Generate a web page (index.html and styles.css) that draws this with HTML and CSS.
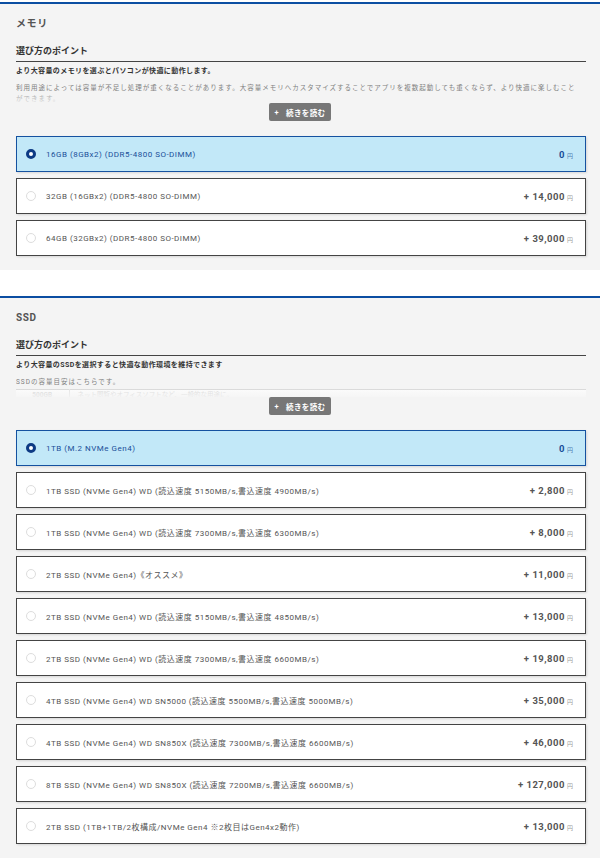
FILE: index.html
```html
<!DOCTYPE html>
<html lang="ja">
<head>
<meta charset="utf-8">
<title>カスタマイズ</title>
<link rel="stylesheet" href="styles.css">
</head>
<body>
<div class="page">
  <section class="panel">
    <h2 class="panel-title">メモリ</h2>
    <h3 class="point-title">選び方のポイント</h3>
    <div class="point-body">
      <p class="lead">より大容量のメモリを選ぶとパソコンが快適に動作します。</p>
      <p class="desc">利用用途によっては容量が不足し処理が重くなることがあります。大容量メモリへカスタマイズすることでアプリを複数起動しても重くならず、より快適に楽しむことができます。</p>
    </div>
    <div class="more-wrap"><button class="more"><span class="plus">+</span>続きを読む</button></div>
    <ul class="options">
      <li class="opt sel"><span class="radio"></span><span class="label">16GB (8GBx2) (DDR5-4800 SO-DIMM)</span><span class="price">0<span class="yen">円</span></span></li>
      <li class="opt"><span class="radio"></span><span class="label">32GB (16GBx2) (DDR5-4800 SO-DIMM)</span><span class="price">+ 14,000<span class="yen">円</span></span></li>
      <li class="opt"><span class="radio"></span><span class="label">64GB (32GBx2) (DDR5-4800 SO-DIMM)</span><span class="price">+ 39,000<span class="yen">円</span></span></li>
    </ul>
  </section>

  <section class="panel">
    <h2 class="panel-title">SSD</h2>
    <h3 class="point-title">選び方のポイント</h3>
    <div class="point-body">
      <p class="lead">より大容量のSSDを選択すると快適な動作環境を維持できます</p>
      <p class="desc">SSDの容量目安はこちらです。</p>
      <table class="guide">
        <tr><th>500GB</th><td>ネット閲覧やオフィスソフトなど、一般的な用途に。</td></tr>
      </table>
    </div>
    <div class="more-wrap"><button class="more"><span class="plus">+</span>続きを読む</button></div>
    <ul class="options">
      <li class="opt sel"><span class="radio"></span><span class="label">1TB (M.2 NVMe Gen4)</span><span class="price">0<span class="yen">円</span></span></li>
      <li class="opt"><span class="radio"></span><span class="label">1TB SSD (NVMe Gen4) WD (読込速度 5150MB/s,書込速度 4900MB/s)</span><span class="price">+ 2,800<span class="yen">円</span></span></li>
      <li class="opt"><span class="radio"></span><span class="label">1TB SSD (NVMe Gen4) WD (読込速度 7300MB/s,書込速度 6300MB/s)</span><span class="price">+ 8,000<span class="yen">円</span></span></li>
      <li class="opt"><span class="radio"></span><span class="label">2TB SSD (NVMe Gen4)《オススメ》</span><span class="price">+ 11,000<span class="yen">円</span></span></li>
      <li class="opt"><span class="radio"></span><span class="label">2TB SSD (NVMe Gen4) WD (読込速度 5150MB/s,書込速度 4850MB/s)</span><span class="price">+ 13,000<span class="yen">円</span></span></li>
      <li class="opt"><span class="radio"></span><span class="label">2TB SSD (NVMe Gen4) WD (読込速度 7300MB/s,書込速度 6600MB/s)</span><span class="price">+ 19,800<span class="yen">円</span></span></li>
      <li class="opt"><span class="radio"></span><span class="label">4TB SSD (NVMe Gen4) WD SN5000 (読込速度 5500MB/s,書込速度 5000MB/s)</span><span class="price">+ 35,000<span class="yen">円</span></span></li>
      <li class="opt"><span class="radio"></span><span class="label">4TB SSD (NVMe Gen4) WD SN850X (読込速度 7300MB/s,書込速度 6600MB/s)</span><span class="price">+ 46,000<span class="yen">円</span></span></li>
      <li class="opt"><span class="radio"></span><span class="label">8TB SSD (NVMe Gen4) WD SN850X (読込速度 7200MB/s,書込速度 6600MB/s)</span><span class="price">+ 127,000<span class="yen">円</span></span></li>
      <li class="opt"><span class="radio"></span><span class="label">2TB SSD (1TB+1TB/2枚構成/NVMe Gen4 ※2枚目はGen4x2動作)</span><span class="price">+ 13,000<span class="yen">円</span></span></li>
    </ul>
  </section>
</div>
</body>
</html>
```

FILE: styles.css
```css
* {
  box-sizing: border-box;
  margin: 0;
  padding: 0;
}

body {
  margin: 0;
  background: #ffffff;
  font-family: Roboto, "Noto Sans CJK JP", sans-serif;
  color: #555555;
}

.page {
  display: flex;
  flex-direction: column;
  gap: 26px;
  padding-top: 2px;
}

.panel {
  background: #f4f4f4;
  border-top: 2px solid #0b4ea2;
  padding: 12px 14px 14px 16px;
}

.panel-title {
  font-size: 10px;
  line-height: 15px;
  font-weight: 700;
  color: #555555;
  letter-spacing: 0.6px;
}

.point-title {
  margin-top: 13px;
  font-size: 9px;
  line-height: 14px;
  font-weight: 700;
  color: #333333;
  padding-bottom: 3px;
  border-bottom: 1px solid #444444;
}

.point-body {
  position: relative;
  height: 41px;
  overflow: hidden;
  padding-top: 4px;
}

.point-body::after {
  content: "";
  position: absolute;
  left: 0;
  right: 0;
  bottom: 0;
  height: 10px;
  background: linear-gradient(to bottom, rgba(244, 244, 244, 0.2), rgba(244, 244, 244, 0.85));
}

.lead {
  font-size: 7px;
  line-height: 11px;
  font-weight: 700;
  color: #333333;
  letter-spacing: 0.4px;
}

.desc {
  margin-top: 6px;
  font-size: 6.5px;
  line-height: 11px;
  color: #808080;
  letter-spacing: 1px;
  padding-right: 5px;
}

.guide {
  width: 100%;
  margin-top: 1px;
  border-collapse: collapse;
  border-top: 1px solid #cccccc;
  font-size: 6.5px;
  line-height: 11px;
  color: #c8c8c8;
}

.guide th {
  width: 53px;
  background: #ffffff;
  border-right: 1px solid #dddddd;
  font-weight: 700;
  text-align: center;
  padding: 0 4px;
}

.guide td {
  padding: 0 8px;
  background: #ffffff;
}

.more-wrap {
  display: flex;
  justify-content: center;
}

.more {
  height: 18px;
  width: 62px;
  border: none;
  border-radius: 2px;
  background: #777777;
  color: #ffffff;
  font-family: Roboto, "Noto Sans CJK JP", sans-serif;
  font-size: 7.5px;
  font-weight: 700;
  letter-spacing: 0.4px;
  display: flex;
  align-items: center;
  justify-content: center;
  margin-left: -2px;
}

.plus {
  margin-right: 7px;
}

.options {
  list-style: none;
  margin-top: 15px;
  display: flex;
  flex-direction: column;
  gap: 6px;
}

.opt {
  display: flex;
  align-items: center;
  height: 36px;
  border: 1px solid #444444;
  background: #ffffff;
  padding: 0 12px 0 9px;
  box-shadow: 1px 1px 2px rgba(0, 0, 0, 0.12);
}

.opt.sel {
  background: #c2e8f8;
  border-color: #1552a0;
}

.radio {
  flex: none;
  width: 10px;
  height: 10px;
  border-radius: 50%;
  border: 1px solid #dddddd;
  background: #ffffff;
  margin-right: 10px;
}

.sel .radio {
  border: 3px solid #0d3a84;
}

.label {
  flex: 1;
  font-size: 8px;
  letter-spacing: 0.5px;
  color: #555555;
  white-space: nowrap;
}

.sel .label {
  color: #1a4f98;
}

.price {
  font-size: 9.5px;
  font-weight: 700;
  letter-spacing: 0.5px;
  color: #555555;
  white-space: nowrap;
}

.sel .price {
  color: #1a4f98;
}

.yen {
  font-size: 6px;
  font-weight: 400;
  color: #999999;
  margin-left: 2px;
  letter-spacing: 0;
}

.sel .yen {
  color: #4a78b0;
}
```
